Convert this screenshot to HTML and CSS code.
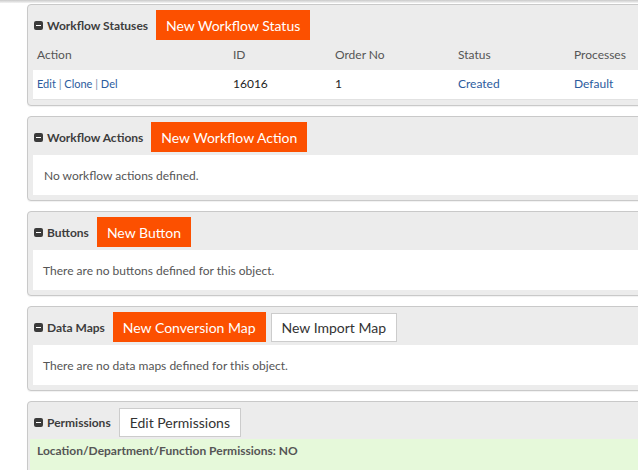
FILE: index.html
```html
<!DOCTYPE html>
<html>
<head>
<meta charset="utf-8">
<link rel="stylesheet" href="styles.css">
</head>
<body>
<div class="topline"></div>
<div class="page">
  <section class="panel">
    <div class="panel-head">
      <span class="title"><span class="toggle"></span>Workflow Statuses</span>
      <button class="btn btn-orange">New Workflow Status</button>
    </div>
    <div class="table">
      <div class="tr th">
        <div class="td">Action</div>
        <div class="td">ID</div>
        <div class="td">Order No</div>
        <div class="td">Status</div>
        <div class="td">Processes</div>
      </div>
      <div class="tr row">
        <div class="td"><a class="link">Edit</a> <span class="sep">|</span> <a class="link">Clone</a> <span class="sep">|</span> <a class="link">Del</a></div>
        <div class="td">16016</div>
        <div class="td">1</div>
        <div class="td"><a class="link">Created</a></div>
        <div class="td"><a class="link">Default</a></div>
      </div>
    </div>
  </section>

  <section class="panel">
    <div class="panel-head">
      <span class="title"><span class="toggle"></span>Workflow Actions</span>
      <button class="btn btn-orange">New Workflow Action</button>
    </div>
    <div class="panel-body body-wide">No workflow actions defined.</div>
  </section>

  <section class="panel">
    <div class="panel-head">
      <span class="title"><span class="toggle"></span>Buttons</span>
      <button class="btn btn-orange">New Button</button>
    </div>
    <div class="panel-body">There are no buttons defined for this object.</div>
  </section>

  <section class="panel">
    <div class="panel-head">
      <span class="title"><span class="toggle"></span>Data Maps</span>
      <button class="btn btn-orange">New Conversion Map</button>
      <button class="btn btn-white">New Import Map</button>
    </div>
    <div class="panel-body">There are no data maps defined for this object.</div>
  </section>

  <section class="panel">
    <div class="panel-head">
      <span class="title"><span class="toggle"></span>Permissions</span>
      <button class="btn btn-white">Edit Permissions</button>
    </div>
    <div class="panel-green">
      <div class="perm-line">Location/Department/Function Permissions: NO</div>
      <div class="perm-line">Roles allowed: All</div>
    </div>
  </section>
</div>
</body>
</html>
```
FILE: styles.css
```css
html, body {
  margin: 0;
  padding: 0;
  background: #ffffff;
  overflow: hidden;
}
body {
  font-family: Lato, "Liberation Sans", sans-serif;
  width: 638px;
  height: 470px;
}
.topline {
  height: 3px;
  background: linear-gradient(#c9c9c9, #f4f4f4);
}
.page {
  padding: 1px 0 0 27px;
  display: flex;
  flex-direction: column;
  gap: 10px;
}
.panel {
  width: 720px;
  box-sizing: border-box;
  background: #ececec;
  border: 1px solid #c9c9c9;
  border-radius: 4px;
  padding: 5px 5px 5px 5px;
  box-shadow: 0 1px 1px rgba(0,0,0,0.06);
}
.panel-head {
  display: flex;
  align-items: center;
  height: 30px;
  gap: 5px;
}
.title {
  display: flex;
  align-items: center;
  font-size: 12px;
  font-weight: 700;
  color: #3d3d3d;
  margin-left: 1px;
  margin-right: 3px;
}
.toggle {
  position: relative;
  width: 9px;
  height: 9px;
  border-radius: 2px;
  background: #3b3b3b;
  margin-right: 4px;
}
.toggle::after {
  content: "";
  position: absolute;
  left: 2px;
  right: 2px;
  top: 4px;
  height: 1px;
  background: #ffffff;
}
.btn {
  font-family: Lato, "Liberation Sans", sans-serif;
  font-size: 14px;
  height: 30px;
  padding: 0 10px;
  border: none;
  margin: 0;
  cursor: pointer;
}
.btn-orange {
  background: #fc5000;
  color: #ffffff;
}
.btn-white {
  background: #ffffff;
  color: #333333;
  border: 1px solid #cccccc;
  height: 29px;
  padding: 0 10px;
}
.table {
  font-size: 12px;
}
.tr {
  display: grid;
  grid-template-columns: 196px 102px 123px 116px 1fr;
  box-sizing: border-box;
}
.th {
  height: 30px;
  align-items: center;
  color: #555555;
  padding-bottom: 1px;
}
.row {
  height: 30px;
  align-items: center;
  background: #ffffff;
  border-bottom: 1px solid #e2e2e2;
  color: #222222;
  font-size: 12px;
  padding-bottom: 2px;
}
.row .td:first-child {
  font-size: 11px;
}
.td {
  padding-left: 4px;
}
.link {
  color: #2c5c9e;
}
.sep {
  color: #7a8ca8;
}
.panel-body {
  margin-top: 3px;
  height: 40px;
  background: #ffffff;
  display: flex;
  align-items: center;
  padding-left: 10px;
  font-size: 12px;
  color: #555555;
}
.body-wide {
  padding-left: 11px;
}
.panel-green {
  margin: 2px -5px 0 -3px;
  background: #e6f9da;
  padding: 3px 7px;
  height: 60px;
}
.perm-line {
  font-size: 12px;
  font-weight: 700;
  color: #555555;
  line-height: 18px;
}
.perm-line + .perm-line {
  margin-top: 8px;
  font-weight: 400;
}
```
